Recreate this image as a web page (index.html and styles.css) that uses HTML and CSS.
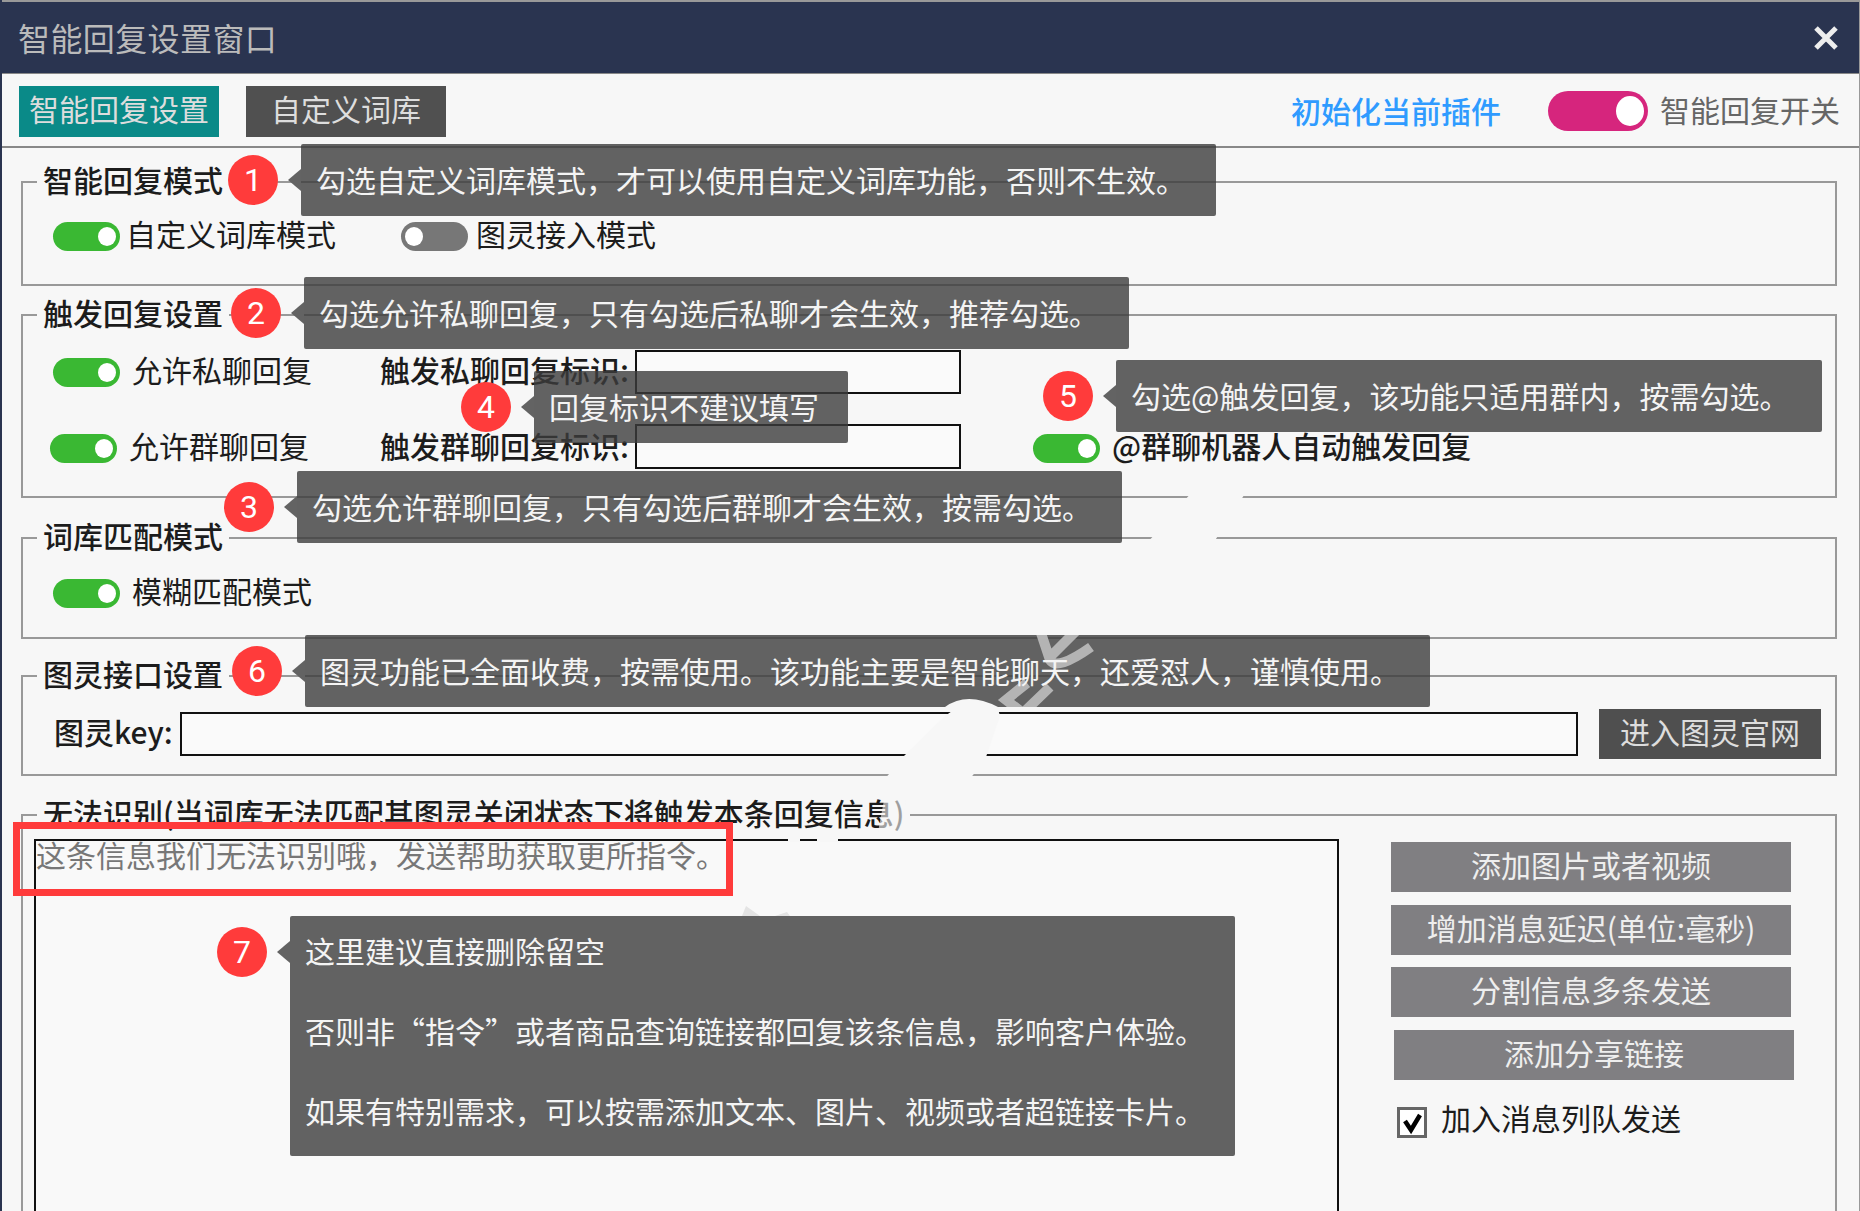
FILE: index.html
```html
<!DOCTYPE html>
<html lang="zh-CN">
<head>
	<meta charset="UTF-8">
	<title>智能回复设置窗口</title>
	<link rel="stylesheet" href="styles.css">
</head>
<body>
	<div class="window">
		<header class="titlebar">
			<span class="title">智能回复设置窗口</span>
			<svg class="close" viewBox="0 0 26 26" aria-label="关闭"><path d="M3 3 L23 23 M23 3 L3 23"/></svg>
		</header>

		<nav class="toolbar">
			<button class="tab tab-active">智能回复设置</button>
			<button class="tab">自定义词库</button>
			<a class="reset-link">初始化当前插件</a>
			<span class="toggle toggle-pink"></span>
			<span class="master-label">智能回复开关</span>
		</nav>

		<main class="content">
			<fieldset class="group group-mode">
				<legend>智能回复模式</legend>
				<div class="row">
					<span class="toggle"></span>
					<label class="tight">自定义词库模式</label>
					<span class="toggle toggle-off"></span>
					<label class="tight">图灵接入模式</label>
				</div>
			</fieldset>

			<fieldset class="group group-trigger">
				<legend>触发回复设置</legend>
				<div class="row trigger-row">
					<span class="toggle"></span>
					<label class="switch-name">允许私聊回复</label>
					<label class="field-name">触发私聊回复标识:</label>
					<input class="text-input" type="text">
				</div>
				<div class="row trigger-row trigger-row-2">
					<span class="toggle"></span>
					<label class="switch-name">允许群聊回复</label>
					<label class="field-name">触发群聊回复标识:</label>
					<input class="text-input" type="text">
					<span class="toggle at-toggle"></span>
					<label class="at-name">@群聊机器人自动触发回复</label>
				</div>
			</fieldset>

			<fieldset class="group group-match">
				<legend>词库匹配模式</legend>
				<div class="row">
					<span class="toggle"></span>
					<label class="switch-name">模糊匹配模式</label>
				</div>
			</fieldset>

			<fieldset class="group group-key">
				<legend>图灵接口设置</legend>
				<div class="row key-row">
					<label class="key-name">图灵key:</label>
					<input class="text-input key-input" type="text">
					<button class="dark-btn">进入图灵官网</button>
				</div>
			</fieldset>

			<fieldset class="group group-fallback">
				<legend>无法识别(当词库无法匹配其图灵关闭状态下将触发本条回复信息)</legend>
				<div class="fallback-body">
					<div class="reply-box">这条信息我们无法识别哦，发送帮助获取更所指令。</div>
					<div class="side-actions">
						<button class="grey-btn">添加图片或者视频</button>
						<button class="grey-btn">增加消息延迟(单位:毫秒)</button>
						<button class="grey-btn">分割信息多条发送</button>
						<button class="grey-btn grey-btn-last">添加分享链接</button>
						<div class="queue">
							<svg class="check" viewBox="0 0 30 31"><rect x="1.5" y="1.5" width="27" height="28" fill="#fff" stroke="#666" stroke-width="3"/><path d="M8 14 L14 23 L23 8" fill="none" stroke="#000" stroke-width="4.5"/></svg>
							<label>加入消息列队发送</label>
						</div>
					</div>
				</div>
			</fieldset>
		</main>

		<!-- annotations on top of the screenshot -->
		<div class="red-box"></div>

		<svg class="watermark" viewBox="0 0 1860 1211">
			<path d="M1192 492 L1246 492 L1214 542 L1148 542 Z"/>
			<path d="M955 709 L998 709 L1000 716 L985 760 L969 780 L884 780 L904 756 L945 716 Z"/>
			<path d="M788 836 h12 v6 h-12 Z M817 836 h21 v6 h-21 Z"/>
			<path class="mark-fade" d="M884 800 L906 800 L900 832 L878 832 Z"/>
			<path class="mark-grey" d="M742 916 L746 906 L760 916 Z M775 916 L787 912 L790 916 Z"/>
		</svg>

		<div class="note note-1">
			<span class="badge">1</span>
			<p class="tip tip-1">勾选自定义词库模式，才可以使用自定义词库功能，否则不生效。</p>
		</div>
		<div class="note note-2">
			<span class="badge">2</span>
			<p class="tip tip-2">勾选允许私聊回复，只有勾选后私聊才会生效，推荐勾选。</p>
		</div>
		<div class="note note-3">
			<span class="badge">3</span>
			<p class="tip tip-3">勾选允许群聊回复，只有勾选后群聊才会生效，按需勾选。</p>
		</div>
		<div class="note note-4">
			<span class="badge">4</span>
			<p class="tip tip-4">回复标识不建议填写</p>
		</div>
		<div class="note note-5">
			<span class="badge">5</span>
			<p class="tip tip-5">勾选@触发回复，该功能只适用群内，按需勾选。</p>
		</div>
		<div class="note note-6">
			<span class="badge">6</span>
			<div class="tip tip-6">
				<svg class="tip-mark" viewBox="0 0 1125 72">
					<path d="M736 -2 L745 25 Q752 36 786 12 M772 -5 L745 22 M745 52 L718 78 L701 65 L722 48"/>
					<path class="tip-mark-dome" d="M640 72 Q662 56 693 72 Z"/>
				</svg>
				<span class="tip-text">图灵功能已全面收费，按需使用。该功能主要是智能聊天，还爱怼人，谨慎使用。</span>
			</div>
		</div>
		<div class="note note-7">
			<span class="badge">7</span>
			<div class="tip tip-7">
				<p>这里建议直接删除留空</p>
				<p>否则非“指令”或者商品查询链接都回复该条信息，影响客户体验。</p>
				<p>如果有特别需求，可以按需添加文本、图片、视频或者超链接卡片。</p>
			</div>
		</div>
	</div>
</body>
</html>
```

FILE: styles.css
```css
/* Base */
:root {
	--navy: #2a3450;
	--page: #f7f7f7;
	--line: #999;
	--green: #3ab833;
	--red: #ff3b3b;
}

* {
	box-sizing: border-box;
}

html, body {
	margin: 0;
	height: 100%;
}

body {
	background: var(--page);
	font-family: "Noto Sans CJK SC", "Noto Sans", sans-serif;
	font-size: 30px;
	color: #1c1c1c;
	overflow: hidden;
}

button, input {
	font: inherit;
}

.window {
	position: relative;
	width: 1860px;
	height: 1211px;
	overflow: hidden;
	border-left: 2px solid var(--navy);
	border-right: 1px solid #999;
}

/* Title bar */
.titlebar {
	display: flex;
	align-items: center;
	justify-content: space-between;
	height: 74px;
	margin-left: -2px;
	margin-right: -1px;
	padding: 0 21px 0 18px;
	background: var(--navy);
	border-top: 2px solid #999;
	border-bottom: 1px solid #888;
}

.title {
	padding-bottom: 2px;
	font-size: 32px;
	letter-spacing: 0.4px;
	line-height: 40px;
	color: #bbb;
}

.close {
	width: 26px;
	height: 26px;
	fill: none;
	stroke: #eee;
	stroke-width: 5;
}

/* Toolbar */
.toolbar {
	display: flex;
	align-items: center;
	height: 74px;
	padding: 0 19px 0 17px;
	border-bottom: 2px solid #888;
}

.tab {
	width: 200px;
	height: 51px;
	margin-top: 3px;
	margin-right: 27px;
	padding: 0 0 6px;
	border: 0;
	background: #505050;
	color: #ddd;
	line-height: 45px;
}

.tab-active {
	background: #0a8a88;
}

.reset-link {
	margin-left: auto;
	margin-right: 47px;
	color: #2f9bff;
	font-weight: 500;
	line-height: 40px;
}

.master-label {
	margin-left: 12px;
	padding-bottom: 3px;
	color: #666;
	line-height: 40px;
}

/* Toggles */
.toggle {
	position: relative;
	flex: none;
	display: block;
	width: 67px;
	height: 29px;
	border-radius: 15px;
	background: var(--green);
}

.toggle::after {
	content: "";
	position: absolute;
	top: 5px;
	right: 4px;
	width: 18px;
	height: 19px;
	border-radius: 50%;
	background: #fff;
}

.toggle-off {
	margin-left: 65px;
	background: #777;
}

.toggle-off::after {
	right: auto;
	left: 4px;
}

.toggle-pink {
	width: 100px;
	height: 40px;
	margin-top: 2px;
	border-radius: 20px;
	background: #d6257d;
}

.toggle-pink::after {
	top: 5px;
	right: 4px;
	width: 28px;
	height: 30px;
}

/* Groups */
.content {
	display: flex;
	flex-direction: column;
	padding: 0 22px 0 19px;
}

.group {
	margin: 0;
	padding: 0;
	border: 2px solid var(--line);
	border-radius: 0;
	min-width: 0;
}

.group legend {
	margin-left: 14px;
	padding: 0 6px 6px;
	font-weight: 500;
	line-height: 30px;
	white-space: nowrap;
}

.group-mode {
	height: 122px;
	margin-top: 16px;
}

.group-trigger {
	height: 201px;
	margin-top: 11px;
}

.group-match {
	height: 119px;
	margin-top: 22px;
}

.group-key {
	height: 118px;
	margin-top: 19px;
}

.group-fallback {
	height: 440px;
	margin-top: 21px;
}

.row {
	display: flex;
	align-items: center;
	height: 29px;
	margin-top: 22px;
	padding-left: 30px;
	line-height: 30px;
	white-space: nowrap;
}

.row label {
	padding-bottom: 7px;
}

.group-match .row {
	margin-top: 23px;
}

.tight {
	margin-left: 6px;
}

.toggle-off + .tight {
	margin-left: 8px;
}

.switch-name {
	width: 248px;
	margin-left: 12px;
}

.field-name,
.at-name,
.key-name {
	font-weight: 500;
}

.field-name {
	width: 255px;
}

/* Trigger group */
.trigger-row {
	height: 44px;
	margin-top: 17px;
}

.trigger-row-2 {
	height: 45px;
	margin-top: 30px;
	padding-left: 27px;
}

.trigger-row-2 .switch-name {
	width: 251px;
}

.trigger-row-2 label {
	padding-bottom: 3px;
}

.trigger-row-2 .toggle {
	margin-top: 4px;
}

.text-input {
	width: 326px;
	height: 100%;
	padding: 0;
	border: 2px solid #111;
	border-radius: 0;
	background: #fafafa;
	outline: 0;
}

.at-toggle {
	margin-left: 72px;
}

.at-name {
	margin-left: 12px;
}

/* Key group */
.key-row {
	height: 50px;
	margin-top: 15px;
	padding-left: 31px;
}

.key-name {
	width: 126px;
}

.key-input {
	width: 1398px;
	height: 44px;
}

.dark-btn {
	width: 222px;
	height: 50px;
	margin-left: 21px;
	padding: 0 0 6px;
	border: 0;
	background: #4f4f4f;
	color: #ddd;
	line-height: 44px;
}

/* Fallback group */
.fallback-body {
	display: flex;
	margin-top: 6px;
	padding-left: 11px;
}

.reply-box {
	width: 1305px;
	height: 420px;
	flex: none;
	padding: 0;
	border: 2px solid #111;
	background: #f9f9f9;
	color: #777;
	line-height: 26px;
}

.side-actions {
	display: flex;
	flex-direction: column;
	align-items: flex-start;
	padding-top: 3px;
	padding-left: 52px;
}

.grey-btn {
	flex: none;
	width: 400px;
	height: 50px;
	margin-bottom: 12.5px;
	padding: 0 0 6px;
	border: 0;
	background: #807f82;
	color: #eee;
	line-height: 44px;
	white-space: nowrap;
}

.grey-btn-last {
	margin-left: 3px;
}

.queue {
	display: flex;
	align-items: center;
	gap: 14px;
	margin-top: 10px;
	margin-left: 6px;
	line-height: 31px;
}

.queue label {
	padding-bottom: 10px;
}

.check {
	width: 30px;
	height: 31px;
}

/* Annotations */
.red-box {
	position: absolute;
	left: 11px;
	top: 822px;
	width: 720px;
	height: 74px;
	border: 7px solid var(--red);
}

.watermark {
	position: absolute;
	left: -2px;
	top: 0;
	width: 1860px;
	height: 1211px;
	fill: var(--page);
	pointer-events: none;
}

.mark-fade {
	fill-opacity: 0.6;
}

.mark-grey {
	fill: #e4e4e4;
}

.note {
	position: absolute;
	display: flex;
	align-items: flex-start;
	gap: 23px;
	white-space: nowrap;
}

.note-1 { left: 226px; top: 144px; }
.note-2 { left: 229px; top: 277px; }
.note-3 { left: 222px; top: 471px; }
.note-4 { left: 459px; top: 371px; }
.note-5 { left: 1041px; top: 360px; }
.note-6 { left: 230px; top: 635px; }
.note-7 { left: 215px; top: 916px; }

.badge {
	flex: none;
	width: 50px;
	height: 50px;
	margin-top: 11px;
	border-radius: 50%;
	background: var(--red);
	color: #fff;
	font-family: Roboto, sans-serif;
	font-size: 32px;
	line-height: 50px;
	text-align: center;
}

.tip {
	position: relative;
	flex: none;
	height: 72px;
	margin: 0;
	padding-left: 15px;
	border-radius: 2px;
	background: rgba(60, 60, 60, 0.8);
	color: #f4f4f4;
	line-height: 70px;
}

.tip::before {
	content: "";
	position: absolute;
	left: -13px;
	top: 25px;
	border-style: solid;
	border-width: 11px 13px 11px 0;
	border-color: transparent #636363 transparent transparent;
}

.tip p {
	height: 80px;
	margin: 0;
	line-height: 68px;
}

.tip-1 { width: 915px; }
.tip-2 { width: 825px; }
.tip-3 { width: 825px; }
.tip-4 { width: 314px; }
.tip-5 { width: 706px; }
.tip-6 { width: 1125px; }
.tip-7 { width: 945px; height: 240px; }

/* watermark strokes that only show on the dark tip */
.tip-mark {
	position: absolute;
	left: 0;
	top: 0;
	width: 100%;
	height: 100%;
	fill: none;
	stroke: #b4b4b4;
	stroke-width: 10;
}

.tip-mark-dome {
	fill: var(--page);
	stroke: none;
}

.tip-text {
	position: relative;
}
```
